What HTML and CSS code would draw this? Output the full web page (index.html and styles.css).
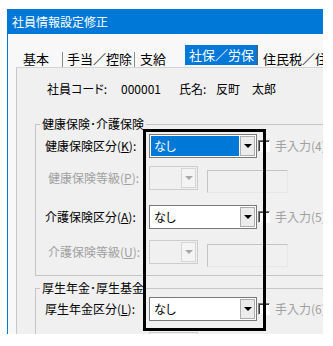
FILE: index.html
```html
<!DOCTYPE html>
<html lang="ja">
<head>
  <meta charset="UTF-8">
  <title>社員情報設定修正</title>
  <link rel="stylesheet" href="styles.css">
</head>
<body>
  <div class="window">
    <div class="titlebar">社員情報設定修正</div>
    <div class="client">
      <!-- タブ -->
      <div class="tabs">
        <div class="tab tab-kihon">基本</div>
        <div class="tab tab-teate">手当／控除</div>
        <div class="tab tab-shikyu">支給</div>
        <div class="tab tab-active">社保／労保</div>
        <div class="tab tab-jumin">住民税／住所</div>
      </div>

      <div class="page">
        <div class="employee">
          <span class="emp-label">社員コード:</span>
          <span class="emp-code">000001</span>
          <span class="emp-name-label">氏名:</span>
          <span class="emp-name">反町　太郎</span>
        </div>

        <!-- 健康保険・介護保険 -->
        <fieldset class="group group-health">
          <legend>健康保険･介護保険</legend>
          <div class="row">
            <span class="field-label">健康保険区分(<u>K</u>):</span>
            <div class="combo">
              <span class="combo-text selected">なし</span>
              <span class="drop"></span>
            </div>
            <span class="check"></span>
            <span class="check-label">手入力(4)</span>
          </div>
          <div class="row row-sub">
            <span class="field-label disabled">健康保険等級(<u>P</u>):</span>
            <div class="combo combo-small">
              <span class="combo-text"></span>
              <span class="drop"></span>
            </div>
            <span class="textbox"></span>
          </div>
          <div class="row row-next">
            <span class="field-label">介護保険区分(<u>A</u>):</span>
            <div class="combo">
              <span class="combo-text">なし</span>
              <span class="drop"></span>
            </div>
            <span class="check"></span>
            <span class="check-label">手入力(5)</span>
          </div>
          <div class="row row-sub2">
            <span class="field-label disabled">介護保険等級(<u>U</u>):</span>
            <div class="combo combo-small">
              <span class="combo-text"></span>
              <span class="drop"></span>
            </div>
            <span class="textbox"></span>
          </div>
        </fieldset>

        <!-- 厚生年金・厚生基金 -->
        <fieldset class="group group-pension">
          <legend>厚生年金･厚生基金</legend>
          <div class="row">
            <span class="field-label">厚生年金区分(<u>L</u>):</span>
            <div class="combo">
              <span class="combo-text">なし</span>
              <span class="drop"></span>
            </div>
            <span class="check"></span>
            <span class="check-label">手入力(6)</span>
          </div>
          <div class="row row-sub2">
            <span class="field-label disabled">厚生年金等級(<u>M</u>):</span>
            <div class="combo combo-small">
              <span class="combo-text"></span>
              <span class="drop"></span>
            </div>
            <span class="textbox"></span>
          </div>
        </fieldset>
      </div>
    </div>
  </div>

  <!-- 注目枠 -->
  <div class="highlight"></div>
</body>
</html>
```

FILE: styles.css
```css
/* 全体 */
body {
  margin: 0;
  background: #fff;
  font-family: "Noto Sans CJK JP", sans-serif;
  font-feature-settings: "palt";
  font-size: 12px;
  color: #000;
}

/* ウィンドウ */
.window {
  margin: 9px 0 0 7px;
  width: 316px;
  height: 325px;
  box-sizing: border-box;
  border-left: 1px solid #0078d7;
  overflow: hidden;
}

.titlebar {
  height: 25px;
  line-height: 25px;
  padding-left: 4px;
  background: #0078d7;
  color: #fff;
  font-size: 12px;
  white-space: nowrap;
}

.client {
  height: 300px;
  padding: 11px 0 0 8px;
  box-sizing: border-box;
  background: #f8f8f8;
}

/* タブ */
.tabs {
  display: flex;
  height: 22px;
  align-items: flex-start;
  font-size: 13px;
  font-feature-settings: normal;
  white-space: nowrap;
}

.tab {
  flex-shrink: 0;
  margin-top: 7px;
  height: 15px;
  line-height: 13px;
  padding-left: 4px;
  box-sizing: border-box;
  border-right: 1px solid #8c8c8c;
}

.tab-kihon { width: 47px; padding-left: 7px; }
.tab-teate { width: 72px; }
.tab-shikyu { width: 50px; padding-left: 5px; border-right: none; }
.tab-jumin { width: 90px; padding-left: 5px; border-right: none; }

.tab-active {
  margin-top: 0;
  width: 73px;
  height: 20px;
  line-height: 20px;
  background: #0078d7;
  color: #fff;
  border-right: 1px solid #5a5a5a;
}

/* タブページ */
.page {
  width: 340px;
  height: 300px;
  padding: 14px 0 0 18px;
  box-sizing: border-box;
  border-top: 1px solid #d4d4d4;
  border-left: 1px solid #c8c8c8;
  background: #f0f0f0;
}

.employee {
  display: flex;
  padding-left: 12px;
  line-height: 14px;
  white-space: nowrap;
}

.emp-label { width: 74px; }
.emp-code { width: 58px; }
.emp-name-label { width: 37px; }

/* グループ */
.group {
  margin: 0;
  padding: 3px 0 11px 9px;
  border: 1px solid #c6c6c6;
  min-width: 0;
}

.group legend {
  margin-left: -5px;
  padding: 0 2px;
  line-height: 14px;
}

.group-health { margin-top: 21px; }
.group-pension { margin-top: 5px; padding-top: 2px; }

.row {
  display: flex;
  align-items: flex-start;
  height: 24px;
  white-space: nowrap;
}

.row-sub { margin-top: 8px; }
.row-next { margin-top: 15px; }
.row-sub2 { margin-top: 11px; }

.field-label {
  width: 104px;
  line-height: 24px;
}

.field-label.disabled {
  width: 101px;
  padding-left: 3px;
  color: #a0a0a0;
}

/* コンボボックス */
.combo {
  display: flex;
  width: 108px;
  height: 24px;
  padding: 1px;
  box-sizing: border-box;
  border: 1px solid #7a7a7a;
  background: #fff;
}

.combo-text {
  flex: 1;
  line-height: 20px;
  padding-left: 3px;
}

.combo-text.selected {
  background: #0078d7;
  color: #fff;
}

.drop {
  display: flex;
  align-items: center;
  justify-content: center;
  width: 15px;
  margin-left: 1px;
  box-sizing: border-box;
  border: 1px solid #adadad;
  background: #ececec;
}

.drop::before {
  content: "";
  border-left: 4px solid transparent;
  border-right: 4px solid transparent;
  border-top: 4px solid #000;
}

.combo-small {
  width: 49px;
  border-color: #cdcdcd;
  background: #f0f0f0;
}

.combo-small .drop {
  border-color: #d6d6d6;
  background: #f4f4f4;
}

.combo-small .drop::before {
  border-top-color: #a8a8a8;
}

.textbox {
  width: 81px;
  height: 23px;
  margin: 4px 0 0 9px;
  box-sizing: border-box;
  border: 1px solid;
  border-color: #c4c4c4 #e6e6e6 #e6e6e6 #c4c4c4;
  background: #f0f0f0;
}

/* チェックボックス */
.check {
  width: 12px;
  height: 12px;
  margin: 6px 0 0 1px;
  box-sizing: border-box;
  border: 1px solid;
  border-color: #808080 #fff #fff #808080;
  box-shadow: inset 1px 1px 0 #404040;
  background: #fff;
}

.check-label {
  margin-left: 5px;
  line-height: 24px;
  color: #a0a0a0;
}

/* 注目枠 */
.highlight {
  position: absolute;
  left: 143px;
  top: 129px;
  width: 123px;
  height: 202px;
  box-sizing: border-box;
  border: 3px solid #000;
}
```
